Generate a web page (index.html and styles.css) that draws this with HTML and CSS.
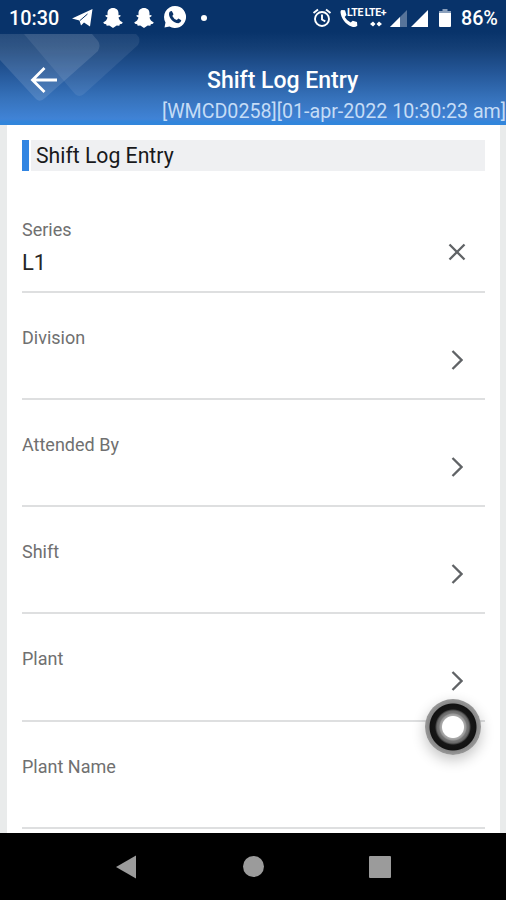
FILE: index.html
```html
<!DOCTYPE html>
<html lang="en">
<head>
<meta charset="utf-8">
<title>Shift Log Entry</title>
<link rel="stylesheet" href="styles.css">
</head>
<body>
<div class="screen">
  <header class="header">
    <svg class="pattern" width="150" height="70" viewBox="0 34 150 70">
      <path fill="#fff" fill-opacity=".12" d="M0 34H92L98 41Q101 45 98 51L45 98Q40 103 36 99L0 60Z"/>
      <path fill="#fff" fill-opacity=".08" d="M24 34H136Q142 39 138 45L84 94Q79 98 75 94Z"/>
    </svg>
    <div class="status">
      <span class="time">10:30</span>
      <svg class="telegram" width="22" height="20" viewBox="0 0 22 20"><path fill="#fff" d="M0 10.500 20.500 1 18 18.500 12 14.500 9 17.500 7.500 12.500Z"/><path stroke="#0b3368" stroke-width="1" d="M8 12.500 15.500 6"/></svg>
      <svg class="snap" width="20" height="20" viewBox="0 0 20 20"><path fill="#fff" d="M10 0C13.500 0 15.600 2.300 15.500 5.300V7.200L17.500 7 17.300 8.500 15.500 9.600C16 12 17.500 13.400 19.700 14.200L19 15.700 16.800 16.200 16.300 17.700 13.700 17.600 10 20 6.300 17.600 3.700 17.700 3.200 16.200 1 15.700.3 14.200C2.500 13.400 4 12 4.500 9.600L2.700 8.500 2.500 7 4.500 7.200V5.300C4.400 2.300 6.500 0 10 0Z"/></svg>
      <svg class="snap" width="20" height="20" viewBox="0 0 20 20"><path fill="#fff" d="M10 0C13.500 0 15.600 2.300 15.500 5.300V7.200L17.500 7 17.300 8.500 15.500 9.600C16 12 17.500 13.400 19.700 14.200L19 15.700 16.800 16.200 16.300 17.700 13.700 17.600 10 20 6.300 17.600 3.700 17.700 3.200 16.200 1 15.700.3 14.200C2.500 13.400 4 12 4.500 9.600L2.700 8.500 2.500 7 4.500 7.200V5.300C4.400 2.300 6.500 0 10 0Z"/></svg>
      <svg class="whatsapp" width="24" height="24" viewBox="0 0 24 24"><path fill="#fff" d="M12 1A11 11 0 1 1 6.500 21.500L1.500 22.500 2.500 17.500A11 11 0 0 1 12 1Z"/><path fill="#0b3368" d="M7 6.500 8.800 6 10.500 9.300 9.300 11Q10.800 14 13.800 15L15.400 13.600 18.300 15.300Q18 18 15.500 18.200C10 18 6 13 6 9Q6 7.300 7 6.500Z"/></svg>
      <i class="dot"></i>
      <svg class="alarm" width="20" height="20" viewBox="0 0 20 20" fill="none" stroke="#fff" stroke-width="1.900"><circle cx="10" cy="11" r="7"/><path d="M1.500 5 6 1.500M18.500 5 14 1.500M10 6.500V11.500L13.300 13.300"/></svg>
      <svg class="call" width="18" height="19" viewBox="0 0 18 19"><path fill="#fff" d="M1.500 1 5 1.200 6.500 6 4.700 8Q7 12 10.700 13.500L12.700 11.700 17 13 17.300 16.800Q15 18.800 11.500 17.500C5 15 1 9 .5 3Q.5 1.300 1.500 1Z"/></svg>
      <span class="lte lte-call">LTE</span>
      <span class="lte-data"><span class="lte">LTE+</span><svg width="12" height="6" viewBox="0 0 12 6"><path fill="#fff" d="M0 3 3 .5 5.500 3 3 5.500ZM6.500 3 9 .5 12 3 9 5.500Z"/></svg></span>
      <svg class="signal-a" width="17" height="17" viewBox="0 0 17 17"><path fill="#fff" fill-opacity=".32" d="M17 0V17H0Z"/><path fill="#fff" d="M10 7V17H0Z"/></svg>
      <svg class="signal-b" width="17" height="17" viewBox="0 0 17 17"><path fill="#fff" d="M17 0V17H0Z"/></svg>
      <svg class="battery" width="12" height="18" viewBox="0 0 12 18"><path fill="#8ba0bc" d="M3.500 0H8.500V2H12V5H0V2H3.500Z"/><path fill="#fff" d="M0 4H12V17Q12 18 11 18H1Q0 18 0 17Z"/></svg>
      <span class="percent">86%</span>
    </div>
    <div class="toolbar">
      <svg class="back" width="28" height="28" viewBox="0 0 28 28" fill="none" stroke="#fff" stroke-width="2.800"><path d="M27 14H3M14.500 2 2.500 14 14.500 26"/></svg>
      <h1 class="title">Shift Log Entry</h1>
    </div>
    <div class="session"><span>[WMCD0258][01-apr-2022 10:30:23 am]</span></div>
  </header>
  <main class="form">
    <h2 class="section">Shift Log Entry</h2>
    <div class="fields">
      <div class="field"><div><div class="label">Series</div><div class="value">L1</div></div><svg class="clear" width="18" height="18" viewBox="0 0 18 18"><path d="M1.500 1.500 16.500 16.500M16.500 1.500 1.500 16.500"/></svg></div>
      <div class="field"><div class="label">Division</div><svg class="chevron" width="12" height="20" viewBox="0 0 12 20"><path d="M1.500 1 10.500 10 1.500 19"/></svg></div>
      <div class="field"><div class="label">Attended By</div><svg class="chevron" width="12" height="20" viewBox="0 0 12 20"><path d="M1.500 1 10.500 10 1.500 19"/></svg></div>
      <div class="field"><div class="label">Shift</div><svg class="chevron" width="12" height="20" viewBox="0 0 12 20"><path d="M1.500 1 10.500 10 1.500 19"/></svg></div>
      <div class="field"><div class="label">Plant</div><svg class="chevron" width="12" height="20" viewBox="0 0 12 20"><path d="M1.500 1 10.500 10 1.500 19"/></svg></div>
      <div class="field"><div class="label">Plant Name</div></div>
    </div>
  </main>
  <nav class="nav">
    <svg width="20" height="24" viewBox="0 0 20 24"><path fill="#9b9b9b" d="M0 12 20 .5V23.500Z"/></svg>
    <i class="home"></i>
    <i class="recent"></i>
  </nav>
  <div class="touch"></div>
</div>
</body>
</html>
```

FILE: styles.css
```css
* { box-sizing: border-box; }
body { margin: 0; font-family: Roboto, "Liberation Sans", sans-serif; }
svg { display: block; flex: none; }
.screen { position: relative; width: 506px; height: 900px; overflow: hidden; display: flex; flex-direction: column; background: #e9ebeb; }

.header { position: relative; height: 125px; flex: none; color: #fff; background: linear-gradient(#08336a 0, #08336a 32px, #143f76 48px, #245697 72px, #3672bb 98px, #4083d6 119px, #3185db 122px, #3185db 125px); }
.pattern { position: absolute; left: 0; top: 34px; }
.status { position: relative; display: flex; align-items: center; height: 36px; padding-left: 9px; }
.time, .percent { font-size: 19.800px; font-weight: 500; line-height: 36px; white-space: nowrap; }
.time { width: 63px; padding-top: 1px; }
.percent { margin-left: 10px; padding-top: 1px; letter-spacing: -.1px; }
.telegram { margin-top: -1px; }
.snap { margin-left: 9px; margin-top: -1px; }
.snap + .snap { margin-left: 11px; }
.whatsapp { margin-left: 9px; margin-top: -2px; }
.dot { width: 6px; height: 6px; margin-left: 14px; margin-top: -1px; border-radius: 50%; background: #fff; }
.alarm { margin-left: 105px; margin-top: -1px; }
.call { margin-left: 8px; margin-top: 1px; }
.lte { font-size: 10.500px; font-weight: 700; line-height: 10px; letter-spacing: -.3px; white-space: nowrap; }
.lte-call { width: 17px; margin: -11px 0 0 -11px; }
.lte-data { display: flex; flex-direction: column; align-items: center; width: 23px; gap: 3px; margin-left: 0; margin-top: -2px; }
.signal-a { margin-left: 3px; }
.signal-b { margin-left: 4px; }
.battery { margin-left: 11px; }

.toolbar { position: relative; display: flex; align-items: center; height: 64px; padding: 24px 0 0 30px; }
.title { margin: 2px 0 0 149px; font-size: 23px; font-weight: 500; line-height: 28px; white-space: nowrap; }
.session { position: relative; display: flex; justify-content: flex-end; height: 24px; font-size: 19.650px; line-height: 24px; color: #c5dcf6; white-space: nowrap; }

.form { flex: none; height: 708px; margin: 0 6px 0 7px; padding: 15px 15px 0 15px; overflow: hidden; background: #fff; }
.section { height: 31px; margin: 0; padding-left: 7px; border-left: 7px solid #3185e2; background: linear-gradient(90deg, #fff 2px, #eff0f2 2px); color: #18191b; font-size: 21.200px; font-weight: 400; line-height: 31px; }
.fields { padding-top: 14.300px; }
.field { display: flex; justify-content: space-between; height: 107.250px; padding-top: 34px; border-bottom: 2px solid #dedfe0; }
.label { color: #707070; font-size: 18px; line-height: 22px; white-space: nowrap; }
.value { margin-top: 9px; color: #262626; font-size: 22px; line-height: 26px; }
.clear, .chevron { fill: none; stroke: #606366; stroke-width: 2.300; }
.clear { margin: 24px 19px 0 0; }
.chevron { margin: 23px 22px 0 0; }

.nav { display: flex; align-items: center; height: 67px; padding-left: 116px; background: #000; }
.home { width: 21px; height: 21px; margin-left: 107px; border-radius: 50%; background: #9b9b9b; }
.recent { width: 22px; height: 22px; margin-left: 105px; border-radius: 1px; background: #9b9b9b; }
.touch { position: absolute; left: 425px; top: 699px; width: 56px; height: 56px; border-radius: 50%; background: radial-gradient(circle, #fff 0, #fff 10.500px, #aaa 11.500px, #999 13px, #777 14px, #696969 16px, #444 17px, #151515 18px, #111 23px, #888 24px, #999 28px); box-shadow: 0 5px 14px rgba(0, 0, 0, .24); }
```
